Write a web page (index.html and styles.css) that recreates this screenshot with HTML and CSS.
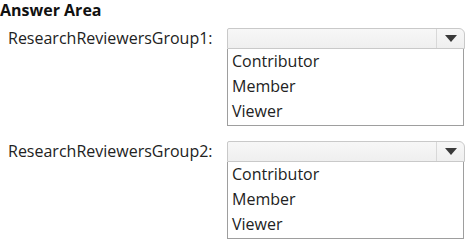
FILE: index.html
```html
<!DOCTYPE html>
<html>
<head>
<meta charset="utf-8">
<link rel="stylesheet" href="styles.css">
</head>
<body>
<div class="page">
  <div class="title">Answer Area</div>
  <div class="row row1">
    <div class="label">ResearchReviewersGroup1:</div>
    <div class="dropdown">
      <div class="select"><span class="field"></span><span class="btn"><svg width="12" height="7" viewBox="0 0 12 7"><path d="M0 0H12L6 7Z" fill="#3a3a3a"/></svg></span></div>
      <ul class="list">
        <li>Contributor</li>
        <li>Member</li>
        <li>Viewer</li>
      </ul>
    </div>
  </div>
  <div class="row row2">
    <div class="label">ResearchReviewersGroup2:</div>
    <div class="dropdown">
      <div class="select"><span class="field"></span><span class="btn"><svg width="12" height="7" viewBox="0 0 12 7"><path d="M0 0H12L6 7Z" fill="#3a3a3a"/></svg></span></div>
      <ul class="list">
        <li>Contributor</li>
        <li>Member</li>
        <li>Viewer</li>
      </ul>
    </div>
  </div>
</div>
</body>
</html>
```
FILE: styles.css
```css
html, body {
  margin: 0;
  padding: 0;
  background: #ffffff;
}
.page {
  font-family: "Open Sans", "Noto Sans", sans-serif;
  color: #222222;
  width: 473px;
  height: 241px;
  overflow: hidden;
}
.title {
  font-weight: 700;
  font-size: 16px;
  line-height: 20px;
  color: #111;
}
.row {
  display: flex;
  align-items: flex-start;
}
.row1 {
  margin-top: 8px;
}
.row2 {
  margin-top: 15px;
}
.label {
  font-size: 16px;
  line-height: 21px;
  width: 219px;
  padding-left: 8px;
  flex: none;
}
.dropdown {
  width: 238px;
  flex: none;
}
.select {
  display: flex;
  height: 19px;
  border: 1px solid #c9c9c9;
  border-radius: 2px 6px 0 0;
  background: linear-gradient(#f7f7f7, #efefef);
}
.field {
  flex: 1;
}
.btn {
  width: 27px;
  border-left: 1px solid #d8d8d8;
  display: flex;
  align-items: center;
  justify-content: center;
}
.list {
  list-style: none;
  margin: 0;
  padding: 0 0 1px 4px;
  width: 231px;
  border: 1px solid #9e9e9e;
  border-top: none;
  font-size: 16px;
  line-height: 25px;
}
```
